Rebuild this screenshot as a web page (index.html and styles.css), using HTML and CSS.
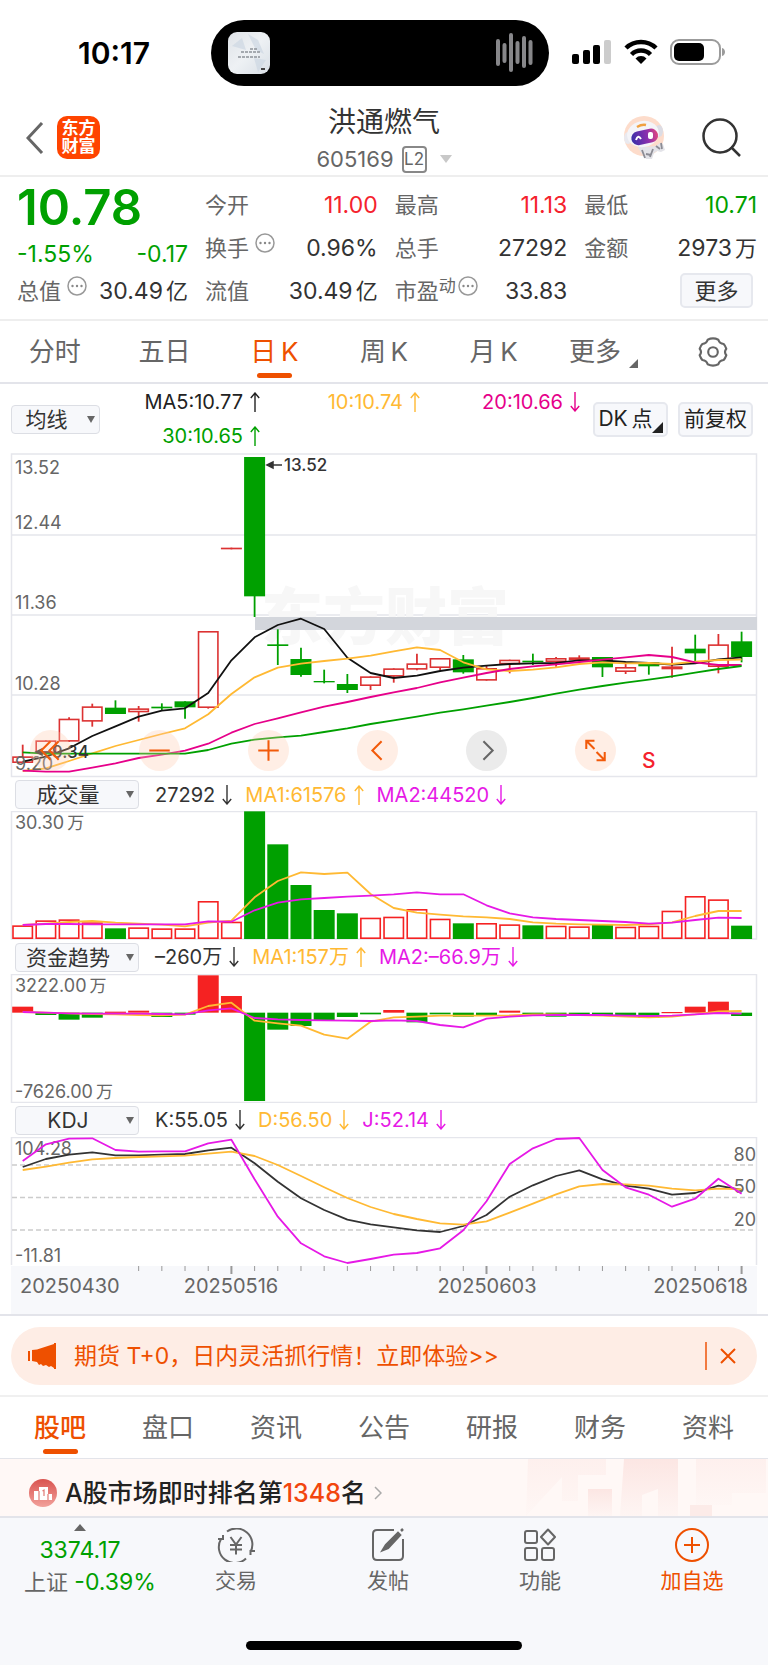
FILE: index.html
```html
<!DOCTYPE html>
<html lang="zh-CN">
<head>
<meta charset="utf-8">
<meta name="viewport" content="width=device-width, initial-scale=1">
<title>洪通燃气 605169</title>
<link rel="stylesheet" href="styles.css">
</head>
<body>
<svg class="defs" aria-hidden="true"><defs>
  <g id="dots"><circle cx="10" cy="10" r="9" fill="none" stroke="#999" stroke-width="1.500"/><g fill="#888"><circle cx="5.500" cy="10" r="1.200"/><circle cx="10" cy="10" r="1.200"/><circle cx="14.500" cy="10" r="1.200"/></g></g>
  <path id="up" d="M5 20V1M.8 6L5 1l4.200 5" fill="none" stroke="currentColor" stroke-width="1.400"/>
  <path id="down" d="M5 0v19M.8 14L5 19l4.200-5" fill="none" stroke="currentColor" stroke-width="1.400"/>
</defs></svg>
<div class="app">
  <div class="status">
    <span class="clock">10:17</span>
    <div class="island">
      <svg class="thumb" viewBox="0 0 42 42">
        <defs><linearGradient id="tg" x1="0" y1="0" x2="1" y2="1"><stop offset="0" stop-color="#dfe3e8"/><stop offset=".5" stop-color="#eef1f4"/><stop offset="1" stop-color="#d9dfe6"/></linearGradient></defs>
        <rect width="42" height="42" rx="9" fill="url(#tg)"/>
        <path d="M20 2l10 6 6 14-8-4zM4 14l10-8 4 12zM26 26l12 2-8 12z" fill="#cdd7e2" opacity=".7"/>
        <path d="M13 20h19M22 17h8M10 25h22" stroke="#8d9299" stroke-width="1.500" stroke-dasharray="3 1"/>
        <rect x="33" y="36" width="4" height="2" fill="#444"/>
      </svg>
      <svg class="wave" viewBox="0 0 38 40" stroke="#87878a" stroke-width="4" stroke-linecap="round"><path d="M2 8v23M8.500 12v16M15 2v35M21.500 10v19M28 5v28M34.500 9v21"/></svg>
    </div>
    <div class="signals">
      <svg width="40" height="26" viewBox="0 0 40 26"><g fill="#000"><rect y="15" width="7" height="10" rx="2"/><rect x="11" y="11" width="7" height="14" rx="2"/><rect x="21" y="6" width="7" height="19" rx="2"/></g><rect x="32" y="1" width="7" height="24" rx="2" fill="#ccc"/></svg>
      <svg width="34" height="26" viewBox="0 0 34 26" fill="none" stroke="#000" stroke-width="4.500"><path d="M2 9a21.500 21.500 0 0 1 30 0"/><path d="M7.500 15.500a13.500 13.500 0 0 1 19 0"/><path d="M17 25l-5.500-5.500a7.500 7.500 0 0 1 11 0z" fill="#000" stroke="none"/></svg>
      <svg width="56" height="26" viewBox="0 0 56 26"><rect x="1" y="1" width="49" height="24" rx="8" fill="none" stroke="#9b9b9b" stroke-width="2"/><rect x="4" y="4" width="30" height="18" rx="5"/><path d="M52 9c4 1 4 7 0 8z" fill="#9b9b9b"/></svg>
    </div>
  </div>

  <header class="header">
    <div class="head-left">
      <button class="plain" aria-label="返回"><svg width="18" height="32" viewBox="0 0 18 32" fill="none" stroke="#666" stroke-width="3"><path d="M16 1L2 16l14 15"/></svg></button>
      <span class="brand">东方<br>财富</span>
    </div>
    <div class="head-title">
      <h1>洪通燃气</h1>
      <div class="code"><span>605169</span><span class="l2">L2</span><svg width="12" height="8" viewBox="0 0 12 8"><path d="M0 0h12L6 8z" fill="#c8c8c8"/></svg></div>
    </div>
    <div class="head-right">
      <button class="plain" aria-label="智能助手"><svg width="42" height="44" viewBox="0 0 42 44">
        <defs><linearGradient id="rv" x1="0" y1="0" x2="1" y2="0"><stop offset="0" stop-color="#3a2fa8"/><stop offset=".6" stop-color="#8a2fae"/><stop offset="1" stop-color="#e0457e"/></linearGradient></defs>
        <circle cx="20" cy="20" r="20" fill="#fddccb"/>
        <path d="M14 31l8 0 10-1 4-3 3 1 2 6-4 2-4-1-3 2-2 6h-6l-3-4-3-4z" fill="#e3e3e8"/>
        <path d="M18 34l3 8M29 33l-3 8M32 30l4 3M37 27l1 6M22 38l5 1" stroke="#8c8c94" stroke-width="1.800" fill="none"/>
        <ellipse cx="4" cy="22" rx="4" ry="6" fill="#e9e9ef"/><ellipse cx="35" cy="15" rx="4" ry="6" fill="#dcdce4"/>
        <ellipse cx="19" cy="18" rx="16" ry="13" transform="rotate(-12 19 18)" fill="#f4f4f8"/><path d="M13 11q5-3 9-2" stroke="#f0a040" stroke-width="2.500" fill="none"/>
        <rect x="7" y="14" width="27" height="14" rx="7" fill="url(#rv)" transform="rotate(-12 20 20)"/>
        <path d="M12 24q2-6 5-1" stroke="#fff" stroke-width="2" fill="none"/><rect x="24" y="16" width="5" height="7" rx="2" fill="#fff"/>
      </svg></button>
      <button class="plain" aria-label="搜索"><svg width="40" height="40" viewBox="0 0 40 40" fill="none" stroke="#333" stroke-width="2.500"><circle cx="18" cy="18" r="16.500"/><path d="M29 29l9 9"/></svg></button>
    </div>
  </header>

  <section class="quote">
    <div class="q-main">
      <strong class="price">10.78</strong>
      <div class="q-cell green"><span>-1.55%</span><span>-0.17</span></div>
      <div class="q-cell"><span class="lab">总值<svg class="dots" viewBox="0 0 20 20"><use href="#dots"/></svg></span><span>30.49<i>亿</i></span></div>
    </div>
    <div class="q-grid">
      <div class="q-cell"><span class="lab">今开</span><span class="red">11.00</span></div>
      <div class="q-cell"><span class="lab">最高</span><span class="red">11.13</span></div>
      <div class="q-cell"><span class="lab">最低</span><span class="green">10.71</span></div>
      <div class="q-cell"><span class="lab">换手<svg class="dots" viewBox="0 0 20 20"><use href="#dots"/></svg></span><span>0.96%</span></div>
      <div class="q-cell"><span class="lab">总手</span><span>27292</span></div>
      <div class="q-cell"><span class="lab">金额</span><span>2973<i>万</i></span></div>
      <div class="q-cell"><span class="lab">流值</span><span>30.49<i>亿</i></span></div>
      <div class="q-cell"><span class="lab">市盈<sup>动</sup><svg class="dots tight" viewBox="0 0 20 20"><use href="#dots"/></svg></span><span>33.83</span></div>
      <div class="q-cell end"><button class="chip more">更多</button></div>
    </div>
  </section>

  <nav class="tabs period">
    <button>分时</button><button>五日</button><button class="on">日&thinsp;K</button><button>周&thinsp;K</button><button>月&thinsp;K</button>
    <button>更多<svg class="corner" width="9" height="9" viewBox="0 0 9 9"><path d="M9 0v9H0z" fill="#666"/></svg></button>
    <button aria-label="设置"><svg width="32" height="30" viewBox="0 0 30 28" fill="none" stroke="#666" stroke-width="2" stroke-linejoin="round"><path d="M10 2.500Q15 0 20 2.500Q21 6 25 6.500Q26.500 8 27.500 11Q25 14 27.500 17Q26.500 20 25 21.500Q21 22 20 25.500Q15 28 10 25.500Q9 22 5 21.500Q3.500 20 2.500 17Q5 14 2.500 11Q3.500 8 5 6.500Q9 6 10 2.500z"/><circle cx="15" cy="14" r="4.500"/></svg></button>
  </nav>

  <section class="charts">
    <div class="ma-bar">
      <span class="pick small"><select aria-label="主图指标"><option>均线</option></select></span>
      <div class="ma-list">
        <span>MA5:10.77<svg class="arr" viewBox="0 0 10 20"><use href="#up"/></svg></span>
        <span class="amber">10:10.74<svg class="arr" viewBox="0 0 10 20"><use href="#up"/></svg></span>
        <span class="pink">20:10.66<svg class="arr" viewBox="0 0 10 20"><use href="#down"/></svg></span>
        <span class="green">30:10.65<svg class="arr" viewBox="0 0 10 20"><use href="#up"/></svg></span>
      </div>
      <div class="ma-actions">
        <button class="chip">DK&thinsp;点<svg class="corner" width="11" height="11" viewBox="0 0 9 9"><path d="M9 0v9H0z" fill="#222"/></svg></button>
        <button class="chip">前复权</button>
      </div>
    </div>

    <div class="main-chart">
      <svg id="kline" class="plot" viewBox="0 0 768 325">
        <path class="frame" d="M11.500 1H756.500V323.500H11.500zM11.500 82H756.500M11.500 162H756.500M11.500 242H756.500"/>
        <text class="mark" x="261" y="187">东方财富</text>
        <rect x="255" y="164" width="502" height="13" fill="#d3d6dc"/>
        <g class="data"></g>
        <g class="axis"><text x="15" y="21">13.52</text><text x="15" y="76">12.44</text><text x="15" y="156">11.36</text><text x="15" y="237">10.28</text><text x="15" y="317">9.20</text></g>
        <path d="M36 299l6-3v6zM42 299h9M267 12l6-3v6zM272 12h10" fill="#333" stroke="#333" stroke-width="1.500"/>
        <text class="note" x="52" y="305">9.34</text><text class="note" x="284" y="18">13.52</text>
        <text class="sell" x="642" y="315">S</text>
      </svg>
      <div class="controls">
        <button aria-label="最早"><svg viewBox="0 0 40 40"><path d="M20 11l-9 9 9 9M28 11l-9 9 9 9"/></svg></button>
        <button aria-label="缩小"><svg viewBox="0 0 40 40"><path d="M10 20h20"/></svg></button>
        <button aria-label="放大"><svg viewBox="0 0 40 40"><path d="M10 20h20M20 10v20"/></svg></button>
        <button aria-label="向左"><svg viewBox="0 0 40 40"><path d="M24 11l-9 9 9 9"/></svg></button>
        <button aria-label="向右" class="off"><svg viewBox="0 0 40 40"><path d="M17 11l9 9-9 9"/></svg></button>
        <button aria-label="全屏"><svg viewBox="0 0 40 40"><path d="M19 10.500h-8v8M11 10.500l8 8M21 29.500h8v-8M29 29.500l-8-8"/></svg></button>
      </div>
    </div>

    <div class="ind-bar"><span class="pick"><select aria-label="副图一"><option>成交量</option></select></span><span>27292<svg class="arr" viewBox="0 0 10 20"><use href="#down"/></svg></span><span class="amber">MA1:61576<svg class="arr" viewBox="0 0 10 20"><use href="#up"/></svg></span><span class="magenta">MA2:44520<svg class="arr" viewBox="0 0 10 20"><use href="#down"/></svg></span></div>
    <svg id="volume" class="plot" viewBox="0 0 768 129"><path class="frame" d="M11.500 .5H756.500V128H11.500z"/><g class="data"></g><g class="axis"><text x="15" y="18">30.30<tspan dx="3" class="unit">万</tspan></text></g></svg>

    <div class="ind-bar"><span class="pick"><select aria-label="副图二"><option>资金趋势</option></select></span><span>–260万<svg class="arr" viewBox="0 0 10 20"><use href="#down"/></svg></span><span class="amber">MA1:157万<svg class="arr" viewBox="0 0 10 20"><use href="#up"/></svg></span><span class="magenta">MA2:–66.9万<svg class="arr" viewBox="0 0 10 20"><use href="#down"/></svg></span></div>
    <svg id="fund" class="plot" viewBox="0 0 768 129"><path class="frame" d="M11.500 .5H756.500V128.500H11.500z"/><g class="data"></g><g class="axis"><text x="15" y="18">3222.00<tspan dx="3" class="unit">万</tspan></text><text x="15" y="124">-7626.00<tspan dx="3" class="unit">万</tspan></text></g></svg>

    <div class="ind-bar"><span class="pick"><select aria-label="副图三"><option>KDJ</option></select></span><span>K:55.05<svg class="arr" viewBox="0 0 10 20"><use href="#down"/></svg></span><span class="amber">D:56.50<svg class="arr" viewBox="0 0 10 20"><use href="#down"/></svg></span><span class="magenta">J:52.14<svg class="arr" viewBox="0 0 10 20"><use href="#down"/></svg></span></div>
    <svg id="kdj" class="plot" viewBox="0 0 768 177">
      <path class="frame" d="M11.500 128V.5H756.500V128"/>
      <rect x="11" y="129" width="746" height="49" fill="#f7f8fb"/>
      <path class="dash" d="M12 28H756M12 60.500H756M12 93H756"/>
      <g class="axis"><text x="15" y="18">104.28</text><text x="15" y="125">-11.81</text></g>
      <g class="axis right"><text x="756" y="24">80</text><text x="756" y="56">50</text><text x="756" y="89">20</text></g>
      <g class="data"></g>
      <g class="dates"><text x="20" y="156">20250430</text><text class="mid" x="231" y="156">20250516</text><text class="mid" x="487" y="156">20250603</text><text class="last" x="748" y="156">20250618</text></g>
    </svg>
  </section>

  <aside class="promo-wrap">
    <div class="promo">
      <svg width="28" height="26" viewBox="0 0 28 26" fill="#ee5000"><path d="M0 8h2v10H0zM4 7l5-.5L26 1v24l-3-2-2 1-3-2-3 1-2-2-2 1-2-3-5-1z"/><path d="M26 0h2v26h-2z"/></svg>
      <a href="#">期货 T+0，日内灵活抓行情！立即体验&gt;&gt;</a>
      <button class="plain close" aria-label="关闭"><svg width="16" height="16" viewBox="0 0 16 16" fill="none" stroke="#ee5000" stroke-width="2"><path d="M1 1l14 14M15 1L1 15"/></svg></button>
    </div>
  </aside>

  <nav class="tabs info"><button class="on">股吧</button><button>盘口</button><button>资讯</button><button>公告</button><button>研报</button><button>财务</button><button>资料</button></nav>

  <a class="rank" href="#">
    <svg width="28" height="28" viewBox="0 0 28 28"><defs><linearGradient id="rg" x1="0" y1="0" x2="0" y2="1"><stop offset="0" stop-color="#d9534f"/><stop offset="1" stop-color="#f2a19b"/></linearGradient></defs><circle cx="14" cy="14" r="14" fill="url(#rg)"/><path d="M5 12h5V8h9v7h4v6H5z" fill="#fff"/><path d="M10 12v9M19 15v6M13.500 12l1.500-1v6" stroke="#e07a75" stroke-width="1.200" fill="none"/></svg>
    <span>A股市场即时排名第<em>1348</em>名</span>
    <svg width="8" height="14" viewBox="0 0 8 14" fill="none" stroke="#aaa" stroke-width="1.500"><path d="M1 1l6 6-6 6"/></svg>
    <svg class="podium" viewBox="0 0 242 57"><defs><linearGradient id="pg" x1="0" y1="0" x2="0" y2="1"><stop offset="0" stop-color="#fce6e3"/><stop offset="1" stop-color="#fef5f3"/></linearGradient></defs><path d="M2 0H80V16H52V42H36V18L0 57z" fill="url(#pg)" opacity=".45"/><path d="M62 30H86V57H62z" fill="url(#pg)"/><path d="M98 0H152V57H132V30L116 36V57H94z" fill="url(#pg)"/><path d="M170 0H240V34H206V46H170z" fill="url(#pg)" opacity=".45"/><path d="M164 46H186V57H164z" fill="#fcebe8"/></svg>
  </a>

  <footer class="bottom">
    <div class="bar">
      <button class="index"><svg width="12" height="7" viewBox="0 0 12 7"><path d="M6 0l6 7H0z" fill="#666"/></svg><span class="value green">3374.17</span><span>上证 <span class="green">-0.39%</span></span></button>
      <button><svg width="38" height="34" viewBox="0 0 38 34" fill="none" stroke="#666" stroke-width="2"><path d="M10 3.500A16 16 0 0 1 33.500 24M29 30.500A16 16 0 0 1 4 11M1 11h5V7M38 23h-4.500v4M13.500 9l5.500 7.500L24.500 9M13 17h12M13 21.500h12M19 16.500v10"/></svg>交易</button>
      <button><svg width="34" height="34" viewBox="0 0 34 34" fill="none" stroke="#666" stroke-width="2"><path d="M23 2H6Q2 2 2 6V28Q2 32 6 32H28Q32 32 32 28V11"/><path d="M12 22L15 17 27 5l2 2-12 13zM30 3l2-2" stroke-width="2.500" fill="#666"/></svg>发帖</button>
      <button><svg width="32" height="34" viewBox="0 0 32 34" fill="none" stroke="#666" stroke-width="2"><rect x="1" y="3" width="12" height="12" rx="2"/><rect x="1" y="20" width="12" height="12" rx="2"/><rect x="18" y="20" width="12" height="12" rx="2"/><path d="M24 1.500l7 7.500-7 7.500-7-7.500z" stroke-linejoin="round"/></svg>功能</button>
      <button class="orange"><svg width="34" height="34" viewBox="0 0 34 34" fill="none" stroke="#ee5000" stroke-width="2"><circle cx="17" cy="17" r="16"/><path d="M9 17h16M17 9v16"/></svg>加自选</button>
    </div>
    <div class="home"></div>
  </footer>
</div>
<script src="charts.js"></script>
</body>
</html>
```
FILE: styles.css
```css
* { box-sizing: border-box; }
body { margin: 0; background: #fff; color: #333; font: 22px/30px Inter, "Noto Sans CJK SC", sans-serif; }
button { font: inherit; color: inherit; background: none; border: 0; padding: 0; margin: 0; }
a { color: inherit; text-decoration: none; }
svg { display: block; flex: none; }
i, em { font-style: normal; font-weight: 400; }
.app { display: flex; flex-direction: column; min-height: 100vh; }
.red { color: #f5222d; }
.green { color: #00a000; }
.amber { color: #ffb933; }
.pink { color: #e6008a; }
.magenta { color: #e619e6; }
.plain { display: flex; }
.defs { width: 0; height: 0; position: absolute; }
.arr { display: inline-block; width: 10px; height: 20px; margin-left: 7px; vertical-align: -3px; }

.status { display: grid; grid-template-columns: 211fr 338px 219fr; align-items: center; padding: 20px 0 0; }
.clock { font-size: 30px; font-weight: 600; color: #000; padding-left: 78px; }
.island { display: flex; align-items: center; justify-content: space-between; height: 66px; padding: 0 15px 0 17px; border-radius: 33px; background: #000; }
.thumb { width: 42px; height: 42px; }
.wave { width: 38px; height: 40px; }
.signals { display: flex; gap: 12px; padding: 0 0 2px 23px; }

.header { display: grid; grid-template-columns: 1fr auto 1fr; align-items: center; padding: 14px 26px 0; height: 91px; border-bottom: 2px solid #eee; }
.head-left { display: flex; align-items: center; gap: 13px; padding-bottom: 6px; }
.brand { width: 43px; height: 43px; padding: 3px 0; border-radius: 10px; background: #ff4400; color: #fff; font-size: 17px; line-height: 18px; font-weight: 700; text-align: center; }
.head-title { text-align: center; padding-top: 3px; }
h1 { margin: 0; font-size: 28px; line-height: 38px; font-weight: 400; }
.code { display: flex; align-items: center; justify-content: center; gap: 8px; color: #666; padding-bottom: 4px; line-height: 36px; }
.code svg { margin-left: 5px; }
.l2 { width: 25px; border: 2px solid #888; border-radius: 4px; font-size: 17px; line-height: 23px; }
.head-right { display: flex; justify-content: flex-end; align-items: center; gap: 36px; padding-bottom: 6px; }

.quote { display: grid; grid-template-columns: 171px 1fr; gap: 17px; padding: 6px 11px 7px 17px; border-bottom: 2px solid #eee; }
.q-main { display: flex; flex-direction: column; }
.price { font-size: 49px; line-height: 50px; font-weight: 600; color: #00a000; }
.q-main .q-cell { height: 37px; padding-top: 5px; }
.q-main .q-cell + .q-cell { padding-top: 4px; }
.q-grid { display: grid; grid-template-columns: repeat(3, 1fr); grid-auto-rows: 43px; column-gap: 17px; }
.q-cell { display: flex; justify-content: space-between; align-items: center; white-space: nowrap; font-size: 23px; }
.q-grid .end { justify-content: flex-end; padding-right: 4px; font-size: 22px; }
.q-cell i { margin-left: 3px; font-size: 22px; }
.lab { display: flex; color: #666; font-size: 22px; }
.lab sup { font-size: 17px; line-height: 20px; }
.dots { width: 20px; height: 20px; margin-left: 6px; }
.dots.tight { margin-left: 2px; }
.chip { position: relative; height: 35px; border: 2px solid #e6e8ee; border-radius: 5px; background: #f7f8fb; color: #222; line-height: 30px; }
.chip.more { width: 73px; color: #333; }

.tabs { display: grid; grid-template-columns: repeat(7, 1fr); color: #666; font-size: 26px; line-height: 36px; }
.tabs button { position: relative; display: flex; align-items: center; justify-content: center; height: 61px; }
.tabs .on { color: #ee5000; }
.tabs .on::after { content: ""; position: absolute; bottom: 4px; left: 50%; width: 35px; height: 5px; margin-left: -17px; border-radius: 3px; background: #ee5000; }
.period { border-bottom: 2px solid #e3e4ea; }
.period .corner { margin: 24px 0 0 8px; }
.info { padding: 0 6px; border-bottom: 1px solid #e3e4ea; }
.info .on { font-weight: 500; }

.charts { border-bottom: 2px solid #e3e4ea; }
.ma-bar { display: grid; grid-template-columns: 89px minmax(0, 480px) 1fr; align-items: center; padding: 1px 15px 0 11px; }
.ma-list { display: grid; grid-template-columns: repeat(3, 1fr); justify-items: end; font-size: 20px; line-height: 34px; color: #222; white-space: nowrap; }
.ma-list .green { color: #00a000; }
.ma-list .amber { color: #ffb933; }
.ma-list .pink { color: #e6008a; }
.ma-actions { display: grid; grid-template-columns: 75px 75px; gap: 10px; justify-content: end; font-size: 21px; white-space: nowrap; }
.ma-actions .chip { padding: 0; }
.ma-actions .chip:first-child { padding-right: 10px; }
.ma-actions .corner { position: absolute; right: 3px; bottom: 2px; }
.pick { position: relative; width: 124px; }
.pick.small { width: 89px; }
.pick select { display: block; width: 100%; height: 29px; appearance: none; border: 1px solid #dcdee4; border-radius: 4px; background: #f7f8fb; color: #333; font: inherit; font-size: 21px; line-height: 27px; padding: 0 18px 0 0; text-align: center; text-align-last: center; }
.pick::after { content: ""; position: absolute; right: 5px; top: 11px; border: 4px solid transparent; border-top: 7px solid #666; border-bottom: 0; }

.main-chart { position: relative; }
.plot { width: 100%; height: auto; }
.frame { fill: none; stroke: #e5e6ec; stroke-width: 1.500; }
.dash { stroke: #ccc; stroke-width: 1.500; stroke-dasharray: 5 3; }
.mark { font-size: 62px; font-weight: 900; fill: #f7f7f7; }
.axis { font-size: 18px; fill: #666; }
.unit { font-size: 17px; }
.right, .last { text-anchor: end; }
.mid { text-anchor: middle; }
.dates { font-size: 20px; fill: #666; }
.note { font-size: 17px; font-weight: 500; fill: #333; }
.sell { font-size: 21px; font-weight: 500; fill: #f5222d; }
.line { fill: none; stroke-width: 1.800; stroke-linejoin: round; }
.controls { position: absolute; left: 30px; right: 152px; bottom: 7px; display: flex; justify-content: space-between; }
.controls button { width: 41px; height: 41px; border-radius: 50%; background: rgba(255, 200, 170, .3); }
.controls .off { background: #ebebeb; }
.controls svg { fill: none; stroke: #f25a0a; stroke-width: 2; }
.controls .off svg { stroke: #666; }
.ind-bar { display: flex; align-items: center; gap: 13px; height: 33px; padding: 0 15px; font-size: 20px; white-space: nowrap; }
.ind-bar .pick { margin-right: 3px; }
#volume + .ind-bar, #fund + .ind-bar { height: 34px; }

.promo-wrap { padding: 11px 11px 10px; border-bottom: 2px solid #f0f0f0; }
.promo { display: flex; align-items: center; gap: 18px; height: 58px; padding: 0 21px 0 17px; border-radius: 29px; background: #feede5; color: #ee5000; font-size: 23px; }
.promo a { flex: 1; }
.close { border-left: 2px solid #f27a40; padding: 6px 0 6px 13px; }

.rank { position: relative; display: flex; align-items: center; height: 58px; padding: 10px 29px 0; gap: 8px; background: #fff8f6; color: #222; font-size: 25px; font-weight: 500; border-bottom: 1px solid #e3e4ea; }
.rank em { color: #f2460d; font-weight: 500; }
.rank > svg, .rank > span { z-index: 1; }
.rank .podium { position: absolute; z-index: 0; right: 0; top: 0; width: 242px; height: 57px; }
.bottom { flex: 1; display: flex; flex-direction: column; align-items: center; justify-content: space-between; border-top: 1px solid #e3e4ea; background: #f7f8fb; padding-bottom: 15px; }
.bar { width: 100%; display: grid; grid-template-columns: 160px repeat(4, 1fr); color: #666; padding-top: 10px; }
.bar button { display: flex; flex-direction: column; align-items: center; gap: 4px; font-size: 21px; line-height: 30px; }
.bar .index { gap: 0; font-size: 22px; padding-left: 20px; margin-top: -4px; white-space: nowrap; }
.index > span { line-height: 32px; }
.index > svg, .index .value { margin-right: 20px; }
.index .value { padding-top: 3px; }
.index .green { font-size: 23px; }
.bar .orange { color: #ee5000; }
.home { width: 276px; height: 9px; border-radius: 5px; background: #000; }
```
FILE: charts.js
```js
// Every series holds one vertical position per trading day, in thirds of a chart unit.
const X0 = 22.7, STEP = 23.19, HALF = 10.5;
const RED = '#dc3232', HOT = '#f52222', GREEN = '#00a000';
const AMBER = '#ffb933', PINK = '#e6008a', MAGENTA = '#e619e6', DARK = '#333';
const x = i => X0 + STEP * i;

function add(id, tag, attrs) {
  const el = document.createElementNS('http://www.w3.org/2000/svg', tag);
  for (const k in attrs) el.setAttribute(k, attrs[k]);
  document.querySelector('#' + id + ' .data').appendChild(el);
}
function line(id, base, values, stroke) {
  add(id, 'polyline', { class: 'line', stroke, points: values.map((v, i) => x(i).toFixed(1) + ',' + (base + v / 3).toFixed(1)).join(' ') });
}
function box(id, i, top, bottom, color, hollow) {
  const inset = hollow ? 0.8 : 0;
  add(id, 'rect', {
    x: x(i) - HALF + inset, y: top + inset, width: 2 * (HALF - inset), height: Math.max(bottom - top - 2 * inset, 1.2),
    fill: hollow ? '#fff' : color, stroke: hollow ? color : 'none', 'stroke-width': 1.6
  });
}

// [rising, high, body top, body bottom, low]
const candles = [
  [1,434,469,489,490],[1,421,421,459,459],[1,352,356,425,425],[1,311,319,365,380],[0,301,323,342,342],[1,318,325,337,365],
  [0,310,320,325,332],[0,304,304,322,356],[1,93,93,324,326],[1,-157,-157,-152,-152],[0,-429,-429,-11,51],[0,88,133,138,195],
  [0,143,177,225,230],[0,209,243,247,250],[0,222,252,270,279],[1,229,229,258,270],[1,205,205,230,248],[1,161,190,209,211],
  [1,174,174,204,210],[0,165,178,217,221],[1,198,204,242,242],[1,179,179,193,220],[0,161,182,187,195],[1,171,174,186,200],
  [1,166,172,181,188],[0,171,171,202,231],[1,192,201,216,222],[0,187,187,199,224],[1,140,199,208,233],[0,104,146,160,184],
  [1,102,133,201,220],[0,95,124,171,187]
];
candles.forEach(([up, hi, top, bot, lo], i) => {
  const color = up ? RED : GREEN, y = v => 147 + v / 3;
  add('kline', 'path', { d: `M${x(i)} ${y(hi)}V${y(lo)}`, stroke: color, 'stroke-width': 1.8 });
  box('kline', i, y(top), y(bot), color, up && bot - top > 5);
});
line('kline', 147, [485,470,445,408,379,350,332,325,279,181,112,75,56,87,173,219,234,227,213,203,197,192,190,189,181,181,186,189,194,190,178,172], '#111');
line('kline', 147, [513,505,483,460,438,420,402,385,343,282,232,203,191,183,176,167,154,142,150,187,208,213,209,202,192,187,190,189,192,185,180,179], AMBER);
line('kline', 147, [512,515,515,503,490,474,464,452,431,398,372,355,337,320,306,291,277,264,247,233,219,207,199,193,186,179,172,165,171,187,195,195], PINK);
line('kline', 147, [457,461,461,461,461,461,461,461,450,431,419,412,407,396,385,372,361,350,338,328,317,306,294,281,269,258,248,239,229,218,207,198], GREEN);

const falling = [4, 10, 11, 12, 13, 14, 19, 22, 25, 31];
[376,361,358,367,385,382,385,385,303,365,34,133,255,330,340,353,350,327,356,370,369,373,376,377,379,375,380,377,332,288,298,377]
  .forEach((v, i) => box('volume', i, v / 3 - 11, 128, falling.includes(i) ? GREEN : HOT, !falling.includes(i)));
line('volume', -11, [375,371,366,363,368,371,374,379,368,362,292,243,217,222,218,282,324,338,344,349,352,357,367,371,373,374,375,373,367,348,333,333], AMBER);
line('volume', -11, [375,372,372,373,373,373,373,373,364,365,331,308,298,294,290,287,283,277,283,283,316,340,352,357,360,363,366,371,368,360,353,354], MAGENTA);

const zero = 638;
[620,645,659,653,635,632,651,644,526,588,903,689,678,660,651,643,630,667,643,650,647,632,647,650,648,648,650,654,636,620,605,648]
  .forEach((v, i) => box('fund', i, Math.min(v, zero) / 3 - 174, Math.max(v, zero) / 3 - 174, v < zero ? HOT : GREEN, false));
line('fund', -174, [636,638,640,642,643,645,646,644,618,608,662,670,677,704,716,665,652,650,647,647,647,646,643,643,645,647,650,652,650,643,634,633], AMBER);
line('fund', -174, [636,638,640,641,641,641,642,643,631,625,654,658,660,661,662,663,661,663,675,682,656,650,646,645,645,645,647,648,647,643,639,641], MAGENTA);

line('kdj', -37, [201,177,164,157,166,166,164,162,151,143,190,245,295,330,359,373,382,391,396,378,345,290,256,228,211,238,257,266,284,279,257,270], DARK);
line('kdj', -37, [210,200,188,178,174,171,169,167,161,155,168,195,228,262,294,321,342,357,370,374,364,338,311,283,259,252,253,257,266,271,266,268], AMBER);
line('kdj', -37, [183,133,116,115,150,155,154,154,130,119,238,350,430,469,489,477,464,459,445,391,304,192,145,117,114,210,262,284,320,296,236,281], MAGENTA);
for (let i = 5; i < 32; i++) {
  add('kdj', 'path', { d: `M${x(i)} 129v${i % 11 === 9 ? 8 : 5}`, stroke: '#999', 'stroke-width': i % 11 === 9 ? 2 : 1 });
}
```
